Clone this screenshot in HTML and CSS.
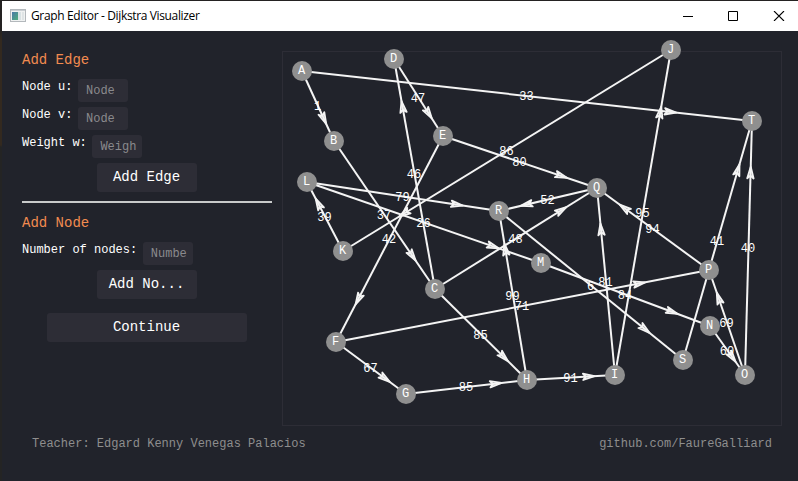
FILE: index.html
```
<!DOCTYPE html>
<html lang="en">
<head>
<meta charset="utf-8">
<title>Graph Editor - Dijkstra Visualizer</title>
<link rel="stylesheet" href="styles.css">
</head>
<body>
<div class="window">
  <header class="titlebar">
    <svg class="app-icon" width="16" height="14" viewBox="0 0 16 14">
      <defs><linearGradient id="pane" x2="1" y2="1"><stop stop-color="#4a78a8"/><stop offset="1" stop-color="#4fae7c"/></linearGradient></defs>
      <rect x=".5" y=".5" width="15" height="12" fill="#f0f2f2" stroke="#b3b8bc"/>
      <path d="M1 1.5h14" stroke="#c9ced2"/>
      <rect x="2" y="3" width="6" height="8" fill="url(#pane)"/>
      <rect x="8" y="3" width="3" height="8" fill="#d9e2e4"/>
      <rect x="12" y="3" width="2" height="8" fill="#dfe4e5"/>
    </svg>
    <h1 class="title">Graph Editor - Dijkstra Visualizer</h1>
    <svg class="controls" width="102" height="10" viewBox="0 0 102 10" fill="none" stroke="#000">
      <path d="M0 5.5h10M45.5 .5h9v9h-9z"/><path d="M91 0l10 10M101 0l-10 10" stroke-width="1.1"/>
    </svg>
  </header>
  <div class="body">
    <aside class="panel">
      <h2 class="heading">Add Edge</h2>
      <label class="field">Node u:<input class="input" placeholder="Node"></label>
      <label class="field">Node v:<input class="input" placeholder="Node"></label>
      <label class="field">Weight w:<input class="input" placeholder="Weigh"></label>
      <button class="button">Add Edge</button>
      <hr class="rule">
      <h2 class="heading">Add Node</h2>
      <label class="field count">Number of nodes:<input class="input" placeholder="Numbe"></label>
      <button class="button low">Add No...</button>
      <button class="button low wide">Continue</button>
    </aside>
    <main class="canvas"><svg id="graph" class="graph" width="498" height="373" viewBox="283 52 498 373"></svg></main>
  </div>
  <footer class="footer"><span>Teacher: Edgard Kenny Venegas Palacios</span><span>github.com/FaureGalliard</span></footer>
</div>
<script src="graph.js"></script>
</body>
</html>
```
FILE: styles.css
```
* { box-sizing: border-box; }
body {
  margin: 0;
  width: 798px;
  height: 481px;
  padding: 1px 0 0 2px;
  overflow: hidden;
  background: linear-gradient(#242222 30px, #33291f 40px, #33291f 145px, #242424 147px);
  font: 12px "Courier New", "Liberation Mono", monospace;
  color: #fff;
}
.window { height: 480px; background: #21232b; }
.titlebar {
  display: flex;
  align-items: center;
  height: 30px;
  padding: 0 13px 0 8px;
  background: #fff;
  color: #000;
}
.app-icon { flex: none; margin-right: 5px; }
.title {
  margin: 0;
  font: 12px/16px "Open Sans", "Noto Sans", sans-serif;
  letter-spacing: -0.36px;
  white-space: nowrap;
}
.controls { margin-left: auto; }
.body { display: flex; height: 395px; padding: 20px 0 0 20px; }
.panel {
  display: flex;
  flex-direction: column;
  width: 250px;
  margin-right: 10px;
}
.heading {
  margin: 0 0 10px;
  font-size: 14px;
  font-weight: 400;
  line-height: 18px;
  color: #f28b50;
}
.field {
  display: flex;
  height: 23px;
  margin-bottom: 5px;
  line-height: 16px;
  white-space: nowrap;
}
.input {
  width: 50px;
  height: 23px;
  margin: 0 0 0 5.6px;
  padding: 0 0 0 8px;
  border: 0;
  border-radius: 3px;
  background: #2d2d36;
  color: #fff;
  font: inherit;
}
.input::placeholder { color: #8a8a8d; opacity: 1; }
.button {
  align-self: center;
  width: 100px;
  height: 29px;
  padding: 0 1px 2px 0;
  border: 0;
  border-radius: 3px;
  background: #2d2d36;
  color: #fff;
  font: 14px "Courier New", "Liberation Mono", monospace;
}
.low { padding-bottom: 1px; }
.wide { width: 200px; margin-top: 14px; }
.rule { width: 250px; height: 2px; margin: 9px 0 11px; border: 0; background: #c8caca; }
.count { line-height: 17px; }
.canvas { width: 500px; height: 375px; border: 1px solid #2d2d36; }
.graph { display: block; overflow: visible; }
.edge { fill: none; stroke: #f4f4f4; stroke-width: 2; }
.arrow { fill: #f4f4f4; fill-opacity: 0.4; stroke: #f4f4f4; stroke-width: 1.8; stroke-linejoin: round; stroke-linecap: round; }
.node { fill: #8f8f8f; }
.label { fill: #fff; font-size: 12px; text-anchor: middle; }
.weight { fill: #fff; font-size: 12px; text-anchor: middle; }
.footer {
  display: flex;
  justify-content: space-between;
  padding: 10px 26px 0 30px;
  line-height: 16px;
  color: #8e8e8e;
}
```
FILE: graph.js
```
const nodes = {
  A: [302, 71], B: [334, 141], C: [435, 289], D: [394, 59], E: [443, 136],
  F: [336, 342], G: [406, 394], H: [527, 380], I: [615, 375], J: [671, 50],
  K: [343, 251], L: [307, 182], M: [541, 263], N: [710, 326], O: [745, 375],
  P: [709, 270], Q: [597, 188], R: [499, 211], S: [683, 360], T: [752, 121]
};
const edges = [
  ["A", "B", 1], ["A", "T", 33], ["B", "C", 37], ["C", "D", 46], ["C", "H", 85],
  ["C", "Q", 48], ["D", "E", 47], ["E", "F", 42], ["E", "Q", 80], ["F", "G", 67],
  ["F", "P", 71], ["G", "H", 85], ["H", "I", 91], ["H", "R", 99], ["I", "Q", 81],
  ["I", "J", 95], ["J", "K", 86], ["K", "L", 39], ["L", "M", 26], ["L", "R", 79],
  ["M", "N", 84], ["N", "O", 60], ["O", "P", 69], ["O", "T", 40], ["P", "Q", 94],
  ["Q", "R", 52], ["R", "S", 6], ["S", "T", 41]
];
const radius = 10;
const svg = document.getElementById("graph");
function add(tag, attrs, text) {
  const el = document.createElementNS("http://www.w3.org/2000/svg", tag);
  for (const key in attrs) el.setAttribute(key, attrs[key]);
  if (text !== undefined) el.textContent = text;
  svg.append(el);
}
for (const [from, to, weight] of edges) {
  const [x1, y1] = nodes[from], [x2, y2] = nodes[to];
  const angle = Math.atan2(y2 - y1, x2 - x1);
  const length = Math.hypot(x2 - x1, y2 - y1);
  // The arrow tip sits partway along the visible part of the edge.
  const tip = radius + 0.847 * (length - 2 * radius);
  const x = x1 + tip * Math.cos(angle), y = y1 + tip * Math.sin(angle);
  const wing = a => `${x - 12 * Math.cos(angle + a)} ${y - 12 * Math.sin(angle + a)}`;
  const notch = `${x - 9 * Math.cos(angle)} ${y - 9 * Math.sin(angle)}`;
  add("path", { class: "edge", d: `M${x1} ${y1}L${x2} ${y2}` });
  add("path", { class: "arrow", d: `M${x} ${y}L${wing(0.27)}L${notch}L${wing(-0.27)}Z` });
  add("text", { class: "weight", x: (x1 + x2) / 2 - 0.5, y: (y1 + y2) / 2 + 4 }, weight);
}
for (const name in nodes) {
  const [x, y] = nodes[name];
  add("circle", { class: "node", cx: x, cy: y, r: radius });
  add("text", { class: "label", x: x - 0.5, y: y + 3 }, name);
}
```
